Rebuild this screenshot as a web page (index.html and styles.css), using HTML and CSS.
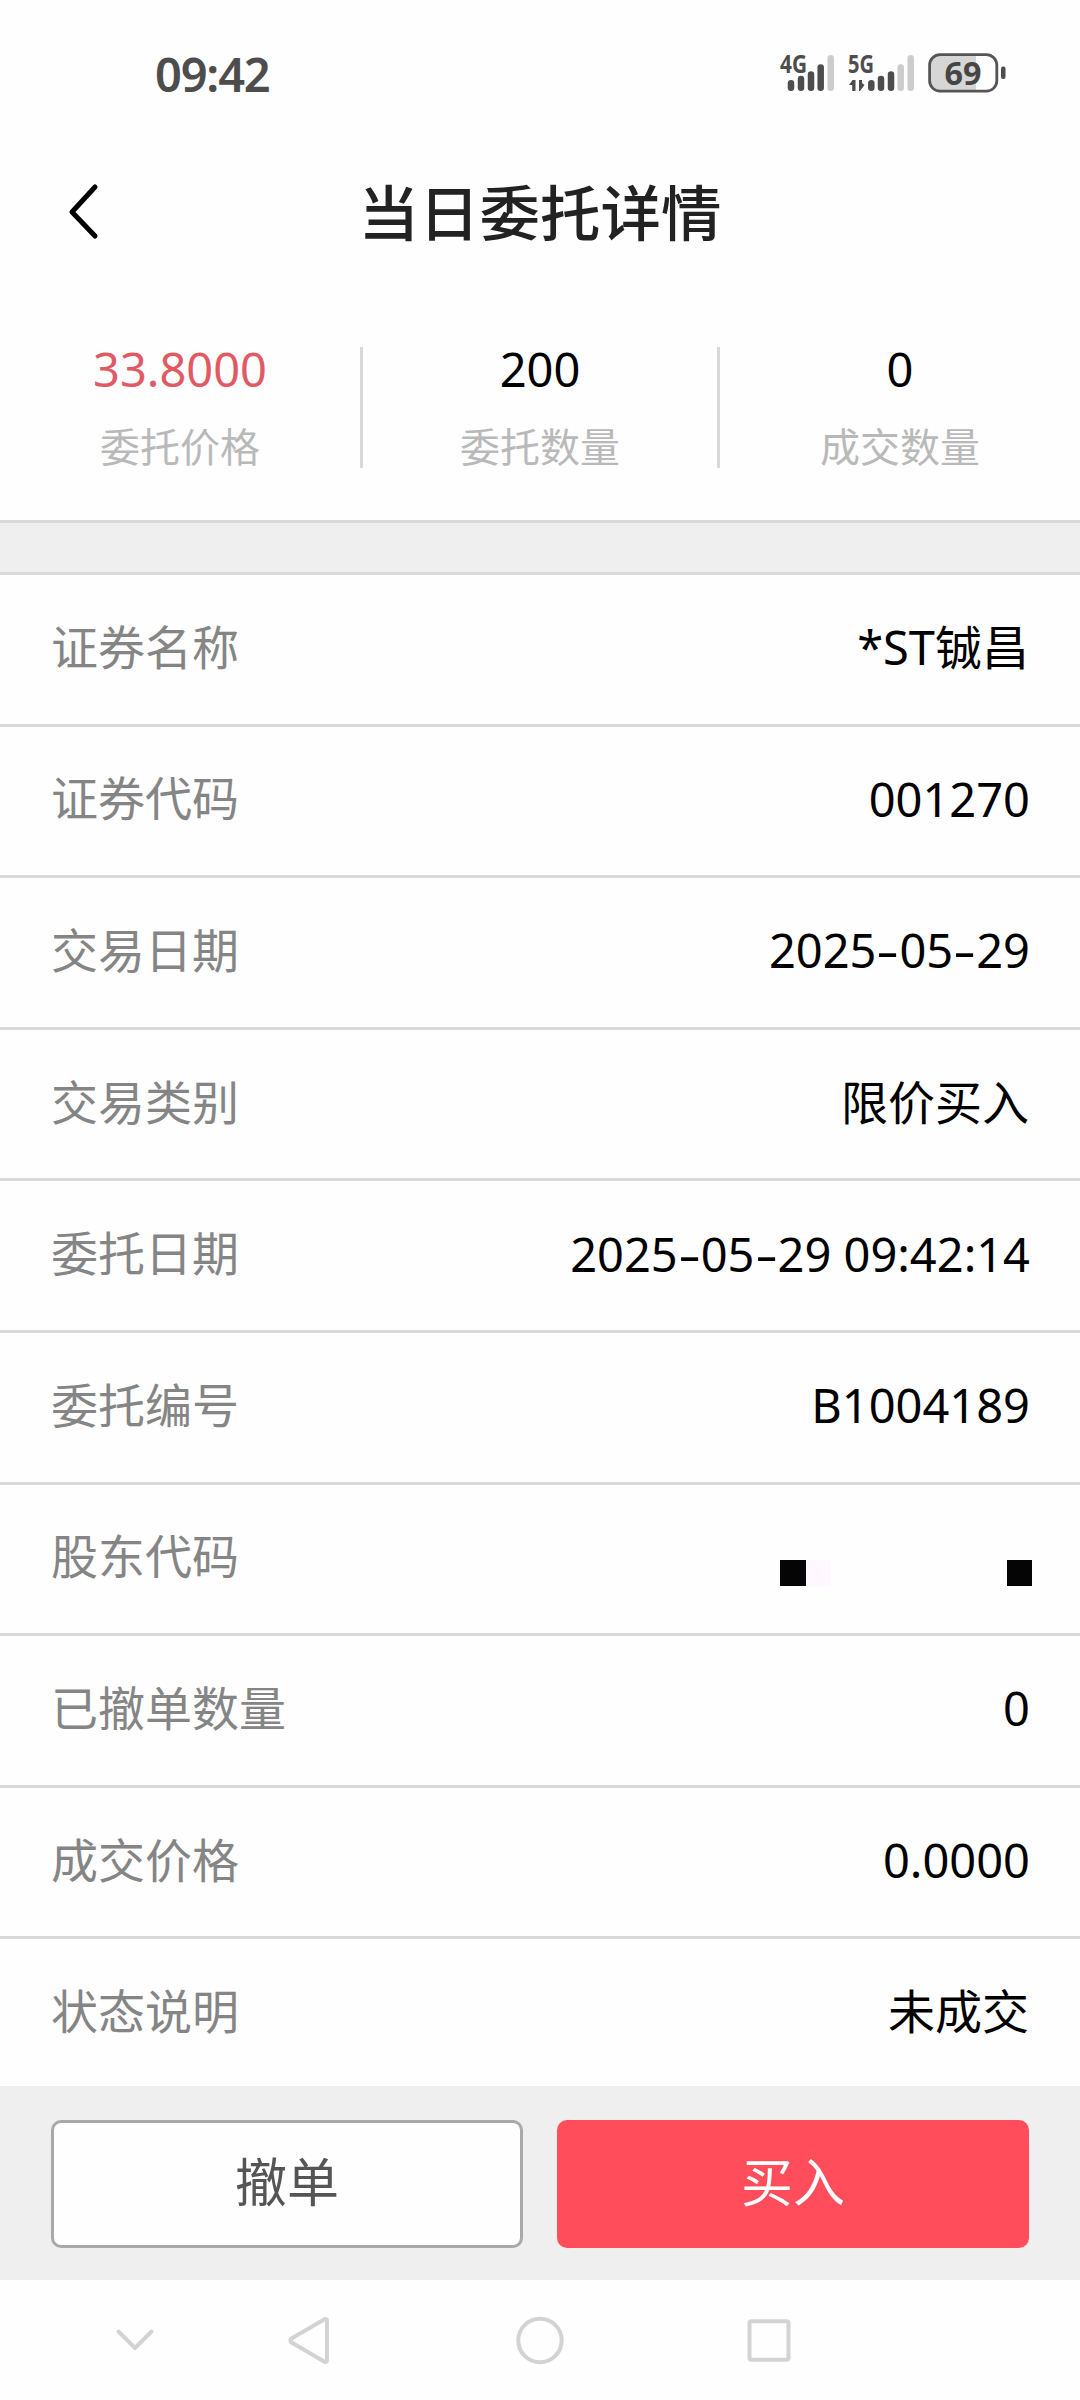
FILE: index.html
```html
<!DOCTYPE html>
<html lang="zh-CN">
<head>
<meta charset="utf-8">
<title>当日委托详情</title>
<link rel="stylesheet" href="styles.css">
</head>
<body>
<div class="screen">
  <div class="status">
    <span class="clock">09:42</span>
    <svg class="indicators" width="230" height="78" viewBox="778 30 230 78">
      <g class="net"><text x="780" y="73" textLength="27" lengthAdjust="spacingAndGlyphs">4G</text><text x="848" y="73" textLength="26" lengthAdjust="spacingAndGlyphs">5G</text></g>
      <g class="bar">
        <path d="M791 83.200V87.700M801 79V87.700M811 74.500V87.700M820.700 67.500V87.700"/>
        <path d="M871.300 83.200V87.700M881 79V87.700M891 74.500V87.700"/>
        <path class="off" d="M830.700 58.300V87.700M900.700 67.500V87.700M910.700 58.300V87.700"/>
      </g>
      <path class="arrows" d="M849 85L852.500 80H855.500V91H852.200V85ZM859 80H862V83L864.500 85L860 91H859Z"/>
      <path class="charge" d="M976 55H940Q930 55 930 65V81Q930 91 940 91H976Z"/>
      <rect class="shell" x="929.600" y="54.600" width="67.200" height="36.600" rx="10.500"/>
      <rect class="tip" x="1001" y="66.500" width="4.500" height="12.500" rx="2"/>
      <text class="level" x="944.500" y="85" textLength="37" lengthAdjust="spacingAndGlyphs">69</text>
    </svg>
  </div>
  <header class="head">
    <svg class="back" width="36" height="62" viewBox="0 0 36 62"><path d="M29 6L6 31L29 55"/></svg>
    <h1>当日委托详情</h1>
  </header>
  <section class="stats">
    <div class="stat"><b class="red">33.8000</b><span>委托价格</span></div>
    <div class="stat"><b>200</b><span>委托数量</span></div>
    <div class="stat"><b>0</b><span>成交数量</span></div>
  </section>
  <div class="band"></div>
  <main class="rows">
    <div class="row"><span>证券名称</span><b class="cjk">*ST铖昌</b></div>
    <div class="row"><span>证券代码</span><b>001270</b></div>
    <div class="row"><span>交易日期</span><b>2025<i>-</i>05<i>-</i>29</b></div>
    <div class="row"><span>交易类别</span><b class="cjk">限价买入</b></div>
    <div class="row"><span>委托日期</span><b>2025<i>-</i>05<i>-</i>29 09:42:14</b></div>
    <div class="row"><span>委托编号</span><b>B1004189</b></div>
    <div class="row"><span>股东代码</span><div class="mask"><em></em><em class="faint"></em><em class="last"></em></div></div>
    <div class="row"><span>已撤单数量</span><b>0</b></div>
    <div class="row"><span>成交价格</span><b>0.0000</b></div>
    <div class="row"><span>状态说明</span><b class="cjk">未成交</b></div>
  </main>
  <footer class="actions">
    <button class="cancel">撤单</button>
    <button class="buy">买入</button>
  </footer>
  <nav class="nav">
    <svg width="1080" height="120" viewBox="0 2280 1080 120">
      <path d="M118.500 2331.500L135 2348L151.500 2331.500"/>
      <path d="M325 2319L291.500 2338.500Q289.500 2340.500 291.500 2342.500L325 2362Q327 2362 327 2360V2321Q327 2319 325 2319Z"/>
      <circle cx="540" cy="2340.500" r="21.700"/>
      <rect x="749.500" y="2321.200" width="39" height="38.600" rx="2"/>
    </svg>
  </nav>
</div>
</body>
</html>
```
FILE: styles.css
```css
* { box-sizing: border-box; }
body { margin: 0; background: #fefefe; font-family: "Noto Sans", "Noto Sans CJK SC", sans-serif; color: #000; }
.screen { width: 1080px; height: 2400px; display: flex; flex-direction: column; overflow: hidden; }
.status { height: 150px; flex: none; padding: 30px 72px 0 155px; display: flex; justify-content: space-between; align-items: flex-start; }
.clock { margin-top: 17px; font: 600 47px/54px "Noto Sans", sans-serif; color: #4d4d4d; letter-spacing: -1.200px; }
.indicators { display: block; }
.net text { font: 700 25px "Noto Sans", sans-serif; fill: #4d4d4d; }
.bar path { stroke: #4d4d4d; stroke-width: 6.500px; stroke-linecap: round; fill: none; }
.bar .off { stroke: #ccc; }
.arrows, .tip { fill: #4d4d4d; }
.charge { fill: #d6d6d6; }
.shell { fill: none; stroke: #555; stroke-width: 2.800px; }
.level { font: 700 33px "Noto Sans", sans-serif; fill: #454545; }
.head { height: 126px; flex: none; display: grid; grid-template-columns: 180px 1fr 180px; align-items: center; padding-bottom: 3px; }
.back { margin-left: 66px; }
.back path { fill: none; stroke: #000; stroke-width: 5px; stroke-linecap: round; stroke-linejoin: round; }
h1 { margin: 0 0 3px; text-align: center; font: 500 60.500px/80px "Noto Sans CJK SC", sans-serif; color: #222; }
.stats { height: 244px; flex: none; display: grid; grid-template-columns: repeat(3, 1fr); padding-top: 71px; }
.stat { height: 121px; display: flex; flex-direction: column; align-items: center; }
.stat:nth-child(2) { border: 3px solid #d9d9d9; border-width: 0 3px; }
.stat b { font-weight: 400; font-size: 47px; line-height: 44px; }
.stat span { font-size: 40px; line-height: 50px; margin-top: 31px; color: #b9b9b9; }
.stat .red { color: #e05a63; }
.band { height: 55px; flex: none; background: #efefef; border: 3px solid #d9d9d9; border-width: 3px 0; }
.rows { height: 1511px; flex: none; overflow: hidden; }
.row { height: 151.600px; padding: 0 50px 5px 51px; display: flex; align-items: center; justify-content: space-between; border-bottom: 3px solid #d9d9d9; font-size: 47px; line-height: 60px; }
.row span { color: #858585; }
.row b { font-weight: 400; padding-top: 1px; }
.row .cjk { padding: 0 1px 0 0; }
.row i { display: inline-block; width: 23px; text-align: center; font-style: normal; transform: scaleX(1.500); }
.mask { display: flex; width: 250px; margin: 33px 0 0; }
.mask em { width: 25.500px; height: 25.500px; background: #050505; }
.mask .faint { background: #fff9ff; }
.mask .last { margin-left: auto; margin-right: -2px; }
.actions { height: 194px; flex: none; background: #efefef; display: grid; grid-template-columns: 1fr 1fr; gap: 34px; padding: 34px 51px 32px; }
button { border-radius: 10px; font: 400 52px/60px "Noto Sans CJK SC", sans-serif; padding: 0 0 9px; }
.cancel { background: #fefefe; border: 3px solid #a9a9a9; color: #555; }
.buy { background: #ff4d5c; border: 0; color: #fff; }
.nav { height: 120px; flex: none; }
.nav svg { display: block; }
.nav path, .nav circle, .nav rect { fill: none; stroke: #d3d3d3; stroke-width: 4px; stroke-linecap: round; stroke-linejoin: round; }
```
